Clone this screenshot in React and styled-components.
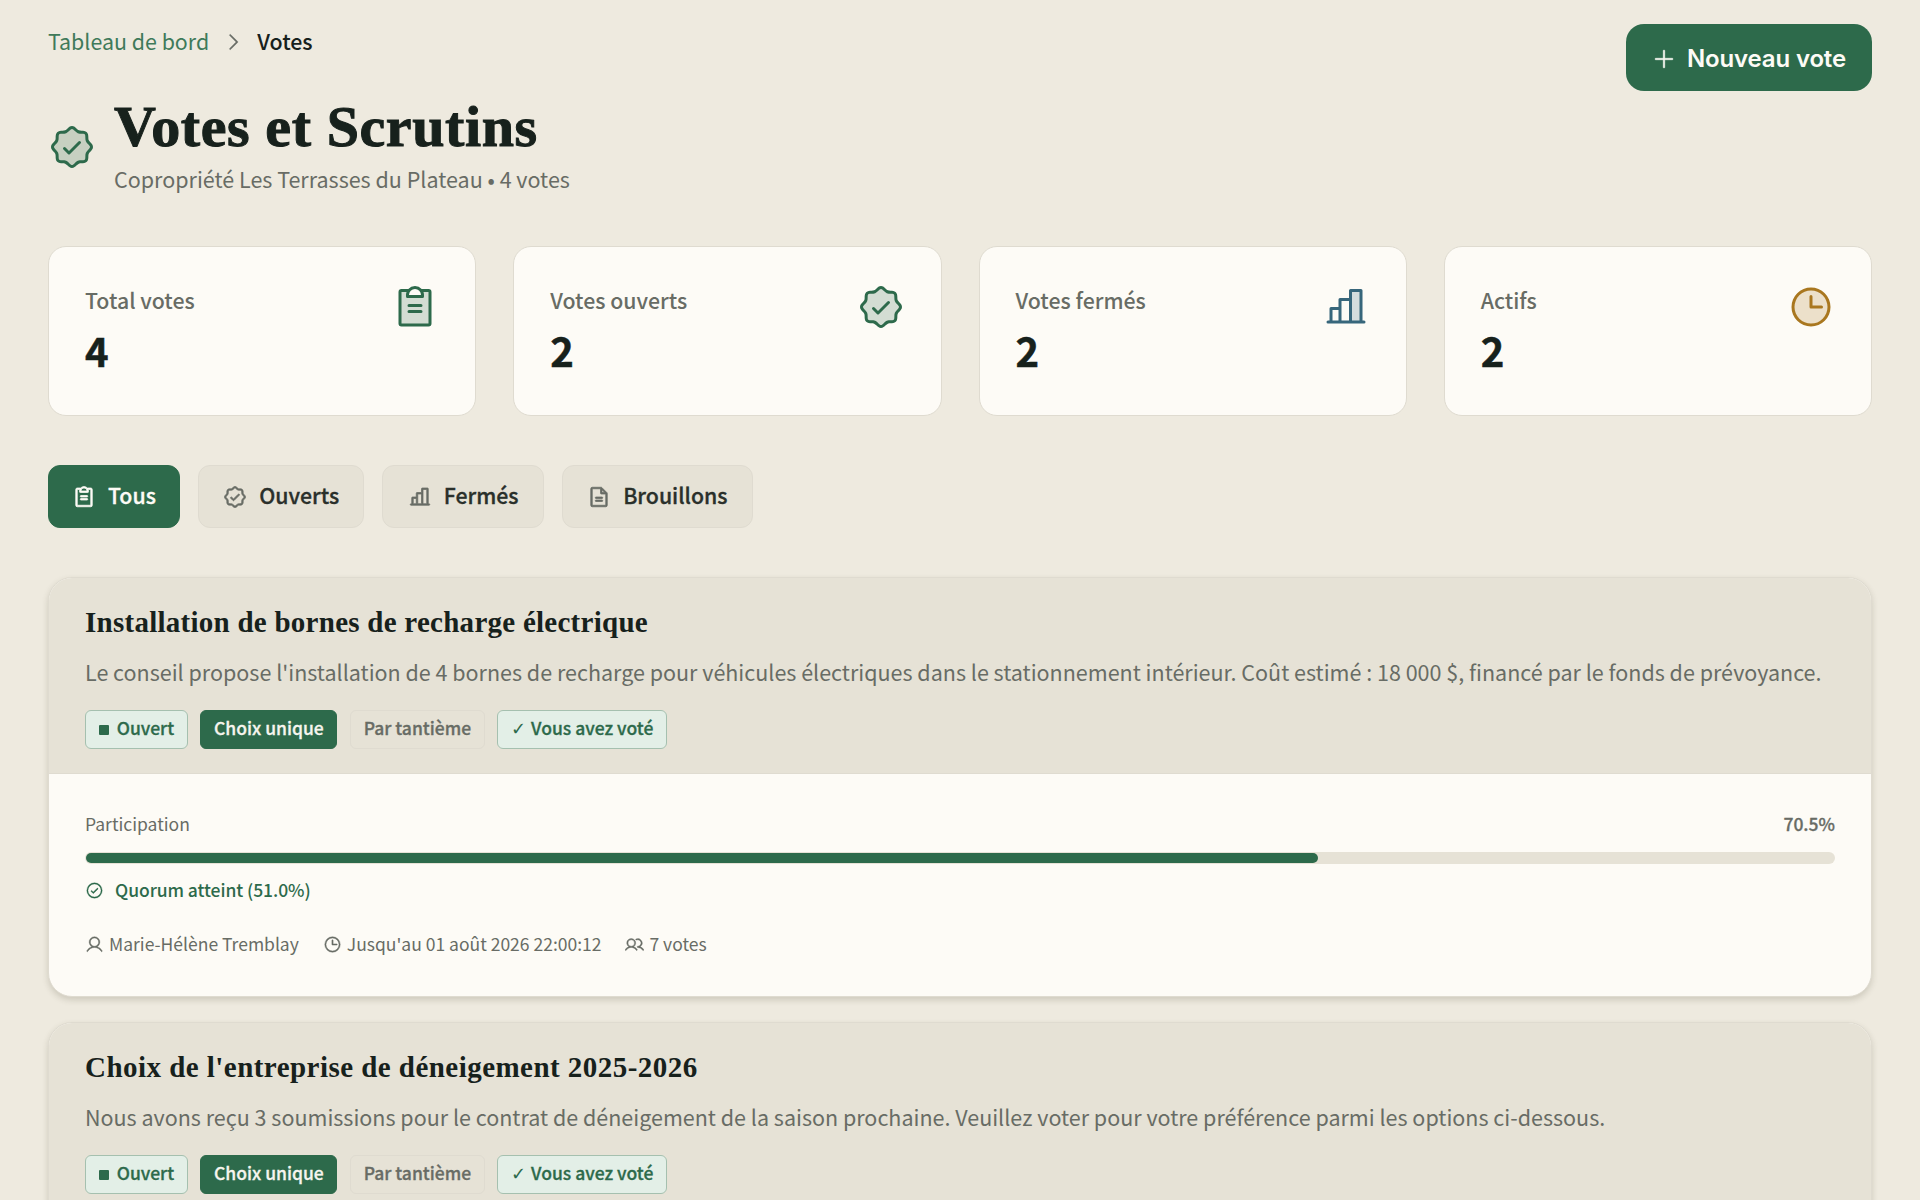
import styled, { createGlobalStyle, css } from 'styled-components';
import {
  PiCaretRight,
  PiChartBar,
  PiChartBarDuotone,
  PiCheckCircle,
  PiClipboardText,
  PiClipboardTextDuotone,
  PiClock,
  PiClockDuotone,
  PiFileText,
  PiPlus,
  PiSealCheck,
  PiSealCheckDuotone,
  PiUser,
  PiUsers,
} from 'react-icons/pi';


const sans = '"Noto Sans CJK JP", "Noto Sans", sans-serif';
const serif = '"Liberation Serif", serif';
const green = '#2d6a4b';
const ink = '#17211c';
const muted = '#686c65';
const line = '#dfdbd0';

const GlobalStyle = createGlobalStyle`
    * {
        box-sizing: border-box;
    }

    body {
        margin: 0;
        height: 1200px;
        overflow: hidden;
        background: #eeeadf;
        color: ${ink};
        font-family: ${sans};
    }

    svg {
        display: block;
        flex-shrink: 0;
    }
`

const Container = styled.div`
    height: 1200px;
    padding: 24px 48px 0;
    overflow: hidden;
`

const Header = styled.header`
    display: flex;
    justify-content: space-between;
    align-items: flex-start;
    height: 222px;
`

const Breadcrumb = styled.nav`
    display: flex;
    align-items: center;
    height: 35px;
    gap: 13px;
    font-size: 21.4px;
    line-height: 32px;
    color: ${muted};

    svg {
        stroke: currentColor;
        stroke-width: 6px;
    }
`

const Crumb = styled.span`
    padding-bottom: 2px;
    color: ${(props) => (props.$current ? ink : '#3f7a5a')};
    font-weight: ${(props) => (props.$current ? 500 : 400)};
`

const TitleRow = styled.div`
    display: flex;
    align-items: center;
    gap: 18px;
    height: 96px;
    margin-top: 40px;
    color: ${green};
`

const Title = styled.h1`
    margin: -7px 0 0;
    font-family: ${serif};
    font-size: 58px;
    font-weight: 700;
    line-height: 66px;
    color: ${ink};
    letter-spacing: 0.6px;
    -webkit-text-stroke: 1px ${ink};
`

const Subtitle = styled.p`
    margin: 4px 0 0;
    font-size: 21.5px;
    line-height: 30px;
    color: ${muted};
`

const NewButton = styled.button`
    display: flex;
    align-items: center;
    gap: 11px;
    height: 67px;
    padding: 2px 26px 0;
    border: 0;
    border-radius: 18px;
    background: ${green};
    color: #fdfbf6;
    font-family: Inter, sans-serif;
    font-size: 24px;
    font-weight: 600;
    letter-spacing: -0.15px;

    svg {
        stroke: currentColor;
        stroke-width: 5px;
    }
`

const Stats = styled.section`
    display: grid;
    grid-template-columns: repeat(4, 1fr);
    gap: 37px;
`

const StatCard = styled.div`
    display: flex;
    justify-content: space-between;
    height: 170px;
    padding: 36px;
    border: 1px solid ${line};
    border-radius: 18px;
    background: #fdfbf6;
    color: ${(props) => props.$color};
`

const StatLabel = styled.div`
    font-size: 21.3px;
    font-weight: 500;
    line-height: 34px;
    color: ${muted};
`

const StatValue = styled.div`
    font-size: 40px;
    font-weight: 700;
    line-height: 66px;
    color: ${ink};
    -webkit-text-stroke: 0.5px ${ink};
`

const Tabs = styled.div`
    display: flex;
    gap: 18px;
    margin: 49px 0;
`

const Tab = styled.button`
    display: flex;
    align-items: center;
    gap: 12px;
    height: 63px;
    padding: 0 ${(props) => (props.$active ? 23 : 24.3)}px;
    border: 1px solid ${(props) => (props.$active ? green : line)};
    border-radius: 12px;
    background: ${(props) => (props.$active ? green : '#e6e2d6')};
    color: ${(props) => (props.$active ? '#fdfbf6' : '#2a302b')};
    font-family: ${sans};
    font-size: 21.3px;
    font-weight: 500;
    -webkit-text-stroke: 0.3px currentColor;

    svg {
        color: ${(props) => (props.$active ? '#fdfbf6' : muted)};
        stroke: currentColor;
        stroke-width: 8px;
    }
`

const TabLabel = styled.span`
    padding-bottom: 5px;
`

const VoteCard = styled.article`
    height: 420px;
    margin-bottom: 25px;
    border: 1px solid ${line};
    border-radius: 24px;
    background: #fdfbf6;
    overflow: hidden;
    box-shadow: 0 3px 6px rgba(60, 55, 35, 0.18);
`

const VoteHeader = styled.div`
    height: 196px;
    padding: 24px 36px 0;
    border-bottom: 1px solid ${line};
    background: #e6e2d6;
`

const VoteTitle = styled.h2`
    margin: 0;
    font-family: ${serif};
    font-size: 29px;
    font-weight: 700;
    line-height: 40px;
    color: ${ink};
    letter-spacing: ${(props) => props.$track}px;
`

const Description = styled.p`
    margin: 11px 0 19px;
    font-size: 21.5px;
    line-height: 38px;
    color: ${muted};
    white-space: nowrap;
`

const Badges = styled.div`
    display: flex;
    gap: 12.5px;
`

const tones = {
    open: css`
        background: #e3efe7;
        border-color: #a5c0af;
        color: ${green};
    `,
    solid: css`
        background: ${green};
        border-color: ${green};
        color: #f6f5ee;
    `,
    plain: css`
        border-color: ${line};
        color: ${muted};
    `,
}

const Badge = styled.span`
    display: flex;
    align-items: center;
    gap: ${(props) => props.$gap || 8}px;
    height: 39px;
    padding: 0 12.7px;
    border: 1px solid;
    border-radius: 6px;
    font-size: 17.5px;
    font-weight: 500;
    line-height: 34px;
    -webkit-text-stroke: 0.3px currentColor;
    ${(props) => tones[props.$tone]}
`

const BadgeText = styled.span`
    padding-bottom: 3px;
`

const Tick = styled.span`
    padding-bottom: 2px;
    font-family: "DejaVu Sans", sans-serif;
    font-size: 18px;
    -webkit-text-stroke: 0;
`

const Dot = styled.i`
    width: 10px;
    height: 10px;
    border-radius: 1px;
    background: ${green};
`

const VoteBody = styled.div`
    padding: 35px 36px;
    font-size: 17.5px;
    color: ${muted};
`

const Participation = styled.div`
    display: flex;
    justify-content: space-between;
    line-height: 29px;
`

const Percent = styled.span`
    font-weight: 500;
    -webkit-text-stroke: 0.3px currentColor;
`

const Track = styled.div`
    height: 12px;
    margin: 14px 0 12px;
    padding: 1px;
    border-radius: 6px;
    background: #e6e2d6;
`

const Fill = styled.div`
    height: 10px;
    border-radius: 5px;
    background: ${green};
`

const Quorum = styled.div`
    display: flex;
    align-items: center;
    gap: 11px;
    height: 29px;
    color: ${green};
    font-weight: 500;

    svg {
        stroke: currentColor;
        stroke-width: 4px;
    }
`

const Meta = styled.div`
    display: flex;
    gap: 24px;
    margin-top: 25px;
`

const MetaItem = styled.span`
    display: flex;
    align-items: center;
    gap: 5px;
    height: 29px;

    svg {
        stroke: currentColor;
        stroke-width: 6px;
    }
`

const Small = styled.span`
    padding-bottom: 3px;
    letter-spacing: ${(props) => props.$track || 0}px;
`


const stats = [
    { label: 'Total votes', value: 4, color: green, Icon: PiClipboardTextDuotone },
    { label: 'Votes ouverts', value: 2, color: green, Icon: PiSealCheckDuotone },
    { label: 'Votes fermés', value: 2, color: '#37667b', Icon: PiChartBarDuotone },
    { label: 'Actifs', value: 2, color: '#a9771f', Icon: PiClockDuotone },
]

const tabs = [
    { label: 'Tous', Icon: PiClipboardText, active: true },
    { label: 'Ouverts', Icon: PiSealCheck },
    { label: 'Fermés', Icon: PiChartBar },
    { label: 'Brouillons', Icon: PiFileText },
]

const votes = [
    {
        title: 'Installation de bornes de recharge électrique',
        track: 0.26,
        description: "Le conseil propose l'installation de 4 bornes de recharge pour véhicules électriques dans le stationnement intérieur. Coût estimé : 18 000 $, financé par le fonds de prévoyance.",
        rate: 70.5,
        author: 'Marie-Hélène Tremblay',
        until: "Jusqu'au 01 août 2026 22:00:12",
        count: 7,
    },
    {
        title: "Choix de l'entreprise de déneigement 2025-2026",
        track: 0.46,
        description: 'Nous avons reçu 3 soumissions pour le contrat de déneigement de la saison prochaine. Veuillez voter pour votre préférence parmi les options ci-dessous.',
    },
]

const Vote = ({ vote }) => (
    <VoteCard>
        <VoteHeader>
            <VoteTitle $track={vote.track}>{vote.title}</VoteTitle>
            <Description>{vote.description}</Description>
            <Badges>
                <Badge $tone="open"><Dot /><BadgeText>Ouvert</BadgeText></Badge>
                <Badge $tone="solid"><BadgeText>Choix unique</BadgeText></Badge>
                <Badge $tone="plain"><BadgeText>Par tantième</BadgeText></Badge>
                <Badge $tone="open" $gap={5}><Tick>✓</Tick><BadgeText>Vous avez voté</BadgeText></Badge>
            </Badges>
        </VoteHeader>
        {vote.rate && (
            <VoteBody>
                <Participation>
                    <span>Participation</span>
                    <Percent>{vote.rate}%</Percent>
                </Participation>
                <Track>
                    <Fill style={{ width: `${vote.rate}%` }} />
                </Track>
                <Quorum><PiCheckCircle size={19} /><Small $track={-0.06}>Quorum atteint (51.0%)</Small></Quorum>
                <Meta>
                    <MetaItem><PiUser size={19} /><Small>{vote.author}</Small></MetaItem>
                    <MetaItem><PiClock size={19} /><Small>{vote.until}</Small></MetaItem>
                    <MetaItem><PiUsers size={19} /><Small>{vote.count} votes</Small></MetaItem>
                </Meta>
            </VoteBody>
        )}
    </VoteCard>
)

const App = () => {
  return (
    <Container>
        <GlobalStyle />
        <Header>
            <div>
                <Breadcrumb>
                    <Crumb>Tableau de bord</Crumb>
                    <PiCaretRight size={22} />
                    <Crumb $current>Votes</Crumb>
                </Breadcrumb>
                <TitleRow>
                    <PiSealCheckDuotone size={48} />
                    <div>
                        <Title>Votes et Scrutins</Title>
                        <Subtitle>Copropriété Les Terrasses du Plateau • 4 votes</Subtitle>
                    </div>
                </TitleRow>
            </div>
            <NewButton><PiPlus size={24} />Nouveau vote</NewButton>
        </Header>
        <Stats>
            {stats.map(({ label, value, color, Icon }) => (
                <StatCard key={label} $color={color}>
                    <div>
                        <StatLabel>{label}</StatLabel>
                        <StatValue>{value}</StatValue>
                    </div>
                    <Icon size={48} />
                </StatCard>
            ))}
        </Stats>
        <Tabs>
            {tabs.map(({ label, Icon, active }) => (
                <Tab key={label} $active={active}><Icon size={24} /><TabLabel>{label}</TabLabel></Tab>
            ))}
        </Tabs>
        {votes.map((vote) => (
            <Vote key={vote.title} vote={vote} />
        ))}
    </Container>
  )
}

export default App
